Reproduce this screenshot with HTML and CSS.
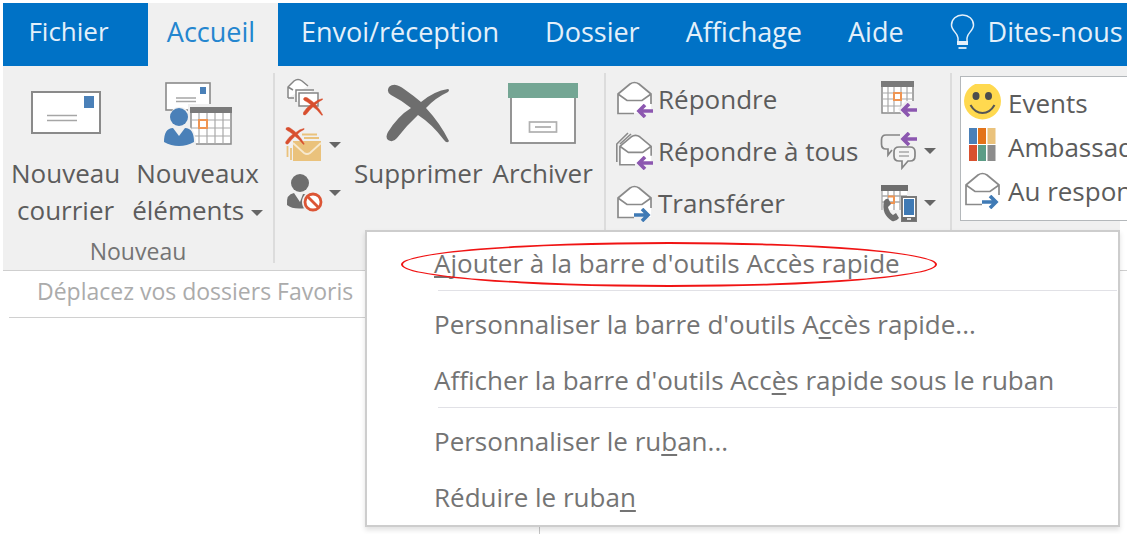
FILE: index.html
```html
<!DOCTYPE html>
<html lang="fr">
<head>
    <meta charset="UTF-8">
    <meta name="viewport" content="width=device-width, initial-scale=1.0">
    <title>Outlook - Accueil</title>
    <link rel="stylesheet" href="styles.css">
</head>
<body>
    <!-- Formes partagées par plusieurs icônes -->
    <svg class="sprites" width="0" height="0" aria-hidden="true">
        <symbol id="envelope" viewBox="0 0 38 38">
            <path d="M2 14 L14 4 Q18.500 1 23 4 L35 14 V33 H2 Z" fill="#fff"/>
            <path d="M18 33.500 H2 V14 L14 4 Q18.500 1 23 4 L35 14 V24 M2 14 L11 20.500 H26 L35 14" fill="none" stroke="#8a8a8a" stroke-width="1.700"/>
        </symbol>
        <symbol id="arrow-left" viewBox="0 0 18 14">
            <path d="M18 7 H3 M10 1 L4 7 L10 13" fill="none" stroke="#8c57b0" stroke-width="3.600"/>
        </symbol>
        <symbol id="arrow-right" viewBox="0 0 18 14">
            <path d="M0 7 H15 M8 1 L14 7 L8 13" fill="none" stroke="#3f7ab5" stroke-width="3.600"/>
        </symbol>
        <symbol id="cross" viewBox="0 0 64 60">
            <path d="M3 3 C8 -2 14 2 18 5 Q28 12 35 18 Q48 7 62 5 Q64 6 62 8 Q49 14 40 24 Q54 39 63 57 Q61 60 58 56 Q46 40 32 31 Q20 42 11 54 Q7 59 2 56 Q-1 53 2 48 Q12 32 25 24 Q15 16 5 11 Q0 8 3 3 Z"/>
        </symbol>
    </svg>

    <nav class="tabs">
        <button class="tab tab-file">Fichier</button>
        <button class="tab tab-active">Accueil</button>
        <button class="tab">Envoi/réception</button>
        <button class="tab">Dossier</button>
        <button class="tab">Affichage</button>
        <button class="tab">Aide</button>
        <button class="tab tab-tell">
            <svg width="26" height="36" viewBox="0 0 26 36" fill="none" stroke="#e4f0fa">
                <path d="M8 27 V24 C8 19 1.500 17 1.500 11 C1.500 5 6.500 1 12.500 1 C18.500 1 23.500 5 23.500 11 C23.500 17 17 19 17 24 V27" stroke-width="1.500"/>
                <path d="M7 29 H18" stroke-width="4"/>
                <path d="M8.500 34 H16.500" stroke-width="1.800"/>
            </svg>
            <span>Dites-nous</span>
        </button>
    </nav>

    <div class="ribbon">
        <!-- Nouveau -->
        <section class="group group-new">
            <div class="group-body">
                <button class="big-button">
                    <span class="big-icon">
                        <svg width="70" height="66" viewBox="0 0 70 66">
                            <rect x="1" y="11" width="68" height="41" fill="#fff" stroke="#8a8a8a" stroke-width="2"/>
                            <rect x="53" y="15" width="10" height="12" fill="#4a80b8"/>
                            <path d="M16 34.500 H46 M16 39.500 H46" stroke="#a6a6a6" stroke-width="1.500"/>
                        </svg>
                    </span>
                    Nouveau<br>courrier
                </button>
                <button class="big-button">
                    <span class="big-icon">
                        <svg width="68" height="66" viewBox="0 0 68 66">
                            <rect x="2" y="2" width="44" height="27" fill="#fff" stroke="#8a8a8a" stroke-width="1.600"/>
                            <rect x="36" y="6" width="6" height="7" fill="#4a80b8"/>
                            <path d="M12 17 H32 M12 20.500 H32" stroke="#a6a6a6" stroke-width="1.300"/>
                            <rect x="24" y="23" width="44" height="42" fill="#f0f0f0"/>
                            <rect x="27" y="27" width="40" height="36" fill="#fff" stroke="#8a8a8a" stroke-width="1.500"/>
                            <rect x="26" y="26" width="42" height="6" fill="#7a7a7a"/>
                            <path d="M35 32 V63 M43 32 V63 M51 32 V63 M59 32 V63 M27 39 H67 M27 47 H67 M27 55 H67" stroke="#a9a9a9" stroke-width="1.200"/>
                            <rect x="35" y="39" width="8" height="8" fill="#fff" stroke="#ef9553" stroke-width="2"/>
                            <path d="M7 35 Q7 26 15 26 Q24 26 25 35 Q25 42 21 45 Q32 45 32 65 H0 V45 H9 Q7 41 7 35" fill="#f0f0f0"/>
                            <circle cx="15" cy="36" r="9" fill="#4a80b8"/>
                            <path d="M9 47 L15 55 L21 47 Q30 47 30 61 Q23 65 15 65 Q7 65 0 61 Q0 47 9 47 Z" fill="#4a80b8"/>
                        </svg>
                    </span>
                    Nouveaux<br>éléments <i class="caret"></i>
                </button>
            </div>
            <div class="group-label">Nouveau</div>
        </section>

        <!-- Supprimer -->
        <section class="group group-delete">
            <div class="group-body">
                <div class="small-column">
                    <button class="small-button" aria-label="Nettoyer">
                        <svg width="38" height="38" viewBox="0 0 38 38" fill="#fff" stroke="#858585" stroke-width="1.500">
                            <path d="M3 20 V9 L9 3 Q13 0 17 3 L23 8 M3 20 H9 M3 9 L8 12"/>
                            <path d="M11 24 V12 H29"/>
                            <path d="M14 26 V15 H33 V28 H14 Z"/>
                            <use href="#cross" x="18" y="19" width="20" height="19" fill="#d84f2f" stroke="#d84f2f"/>
                        </svg>
                    </button>
                    <button class="small-button" aria-label="Courrier indésirable">
                        <svg width="38" height="38" viewBox="0 0 38 38">
                            <path d="M17 8.500 H32 M19 12 H34 M2.500 20 V31 M6 22 V34" stroke="#eac27c" stroke-width="1.800"/>
                            <rect x="8" y="15" width="28" height="20" fill="#eac27c"/>
                            <path d="M8 17 L19 27 Q22 29 25 27 L36 17" fill="none" stroke="#f7e9ce" stroke-width="1.800"/>
                            <use href="#cross" x="0" y="1" width="20" height="18" fill="#d84f2f" stroke="#d84f2f" stroke-width="1.500"/>
                        </svg>
                        <i class="caret"></i>
                    </button>
                    <button class="small-button" aria-label="Bloquer">
                        <svg width="38" height="38" viewBox="0 0 38 38">
                            <circle cx="15" cy="9" r="9" fill="#6e6e6e"/>
                            <path d="M9 19 L15 28 L18 20 Q23 20 25 24 L21 34 Q8 36 2 31 Q1 20 9 19 Z" fill="#6e6e6e"/>
                            <circle cx="28" cy="28" r="11" fill="#f0f0f0"/>
                            <circle cx="28" cy="28" r="8" fill="#fff" stroke="#dc5535" stroke-width="2.800"/>
                            <path d="M22 22 L34 34" stroke="#dc5535" stroke-width="2.800"/>
                        </svg>
                        <i class="caret"></i>
                    </button>
                </div>
                <button class="big-button">
                    <span class="big-icon">
                        <svg width="64" height="60" viewBox="0 0 64 60"><use href="#cross" fill="#6e6e6e"/></svg>
                    </span>
                    Supprimer
                </button>
                <button class="big-button">
                    <span class="big-icon">
                        <svg width="70" height="62" viewBox="0 0 70 62">
                            <rect x="3" y="8" width="64" height="52" fill="#fff" stroke="#8a8a8a" stroke-width="1.800"/>
                            <rect x="0" y="0" width="70" height="15" fill="#74a694"/>
                            <rect x="21.500" y="39" width="27" height="10" fill="none" stroke="#b0b0b0" stroke-width="1.700"/>
                            <path d="M27 44 H43" stroke="#a0a0a0" stroke-width="1.500"/>
                        </svg>
                    </span>
                    Archiver
                </button>
            </div>
        </section>

        <!-- Répondre -->
        <section class="group group-reply">
            <div class="reply-grid">
                <button class="reply-button">
                    <svg width="38" height="38" viewBox="0 0 38 38">
                        <use href="#envelope" width="38" height="38"/>
                        <use href="#arrow-left" x="19" y="24" width="18" height="14"/>
                    </svg>
                    Répondre
                </button>
                <button class="small-button" aria-label="Réunion">
                    <svg width="38" height="38" viewBox="0 0 38 38">
                        <rect x="2" y="2" width="31" height="31" fill="#fff" stroke="#8a8a8a" stroke-width="1.500"/>
                        <rect x="1" y="1" width="33" height="6" fill="#7a7a7a"/>
                        <path d="M8 7 V33 M14 7 V33 M21 7 V33 M27 7 V33 M2 13 H33 M2 19 H33 M2 26 H33" stroke="#a9a9a9" stroke-width="1.200"/>
                        <rect x="14" y="13" width="7" height="7" fill="#fff" stroke="#ef9553" stroke-width="2"/>
                        <path d="M18 29 L26 21 H38 V38 H24 Z" fill="#f0f0f0"/>
                        <use href="#arrow-left" x="19" y="23" width="18" height="14"/>
                    </svg>
                </button>
                <button class="reply-button">
                    <svg width="38" height="38" viewBox="0 0 38 38">
                        <path d="M0.800 30 V12 L12 1 M4 12 L15 2" fill="none" stroke="#8a8a8a" stroke-width="1.600"/>
                        <use href="#envelope" x="2" y="1" width="36" height="36"/>
                        <use href="#arrow-left" x="19" y="24" width="18" height="14"/>
                    </svg>
                    Répondre à tous
                </button>
                <button class="small-button" aria-label="Messagerie instantanée">
                    <svg width="38" height="38" viewBox="0 0 38 38" fill="none" stroke="#858585" stroke-width="1.700">
                        <path d="M20 3 H6 Q1.500 3 1.500 8 V12 Q1.500 17 6 17 H8 V23 L12 18"/>
                        <path d="M19 15 H30 Q35 15 35 20 V24 Q35 29 30 29 H28 L22 36 V29 H19 Q14 29 14 24 V20 Q14 15 19 15 Z" fill="#f4f4f4"/>
                        <path d="M19 20 H29 M19 24 H29" stroke="#a6a6a6" stroke-width="1.400"/>
                        <use href="#arrow-left" x="19" y="0" width="18" height="14"/>
                    </svg>
                    <i class="caret"></i>
                </button>
                <button class="reply-button">
                    <svg width="38" height="38" viewBox="0 0 38 38">
                        <use href="#envelope" width="38" height="38"/>
                        <use href="#arrow-right" x="18" y="24" width="18" height="14"/>
                    </svg>
                    Transférer
                </button>
                <button class="small-button" aria-label="Plus">
                    <svg width="38" height="38" viewBox="0 0 38 38">
                        <path d="M2 7 H27 V12 H20 V26 H2 Z" fill="#fff"/>
                        <path d="M2 6 V26 M8 7 V16 M14 7 V26 M20 7 V26 M2 12 H27 M2 18 H20" stroke="#a9a9a9" stroke-width="1.300"/>
                        <rect x="1" y="1" width="27" height="6" fill="#6e6e6e"/>
                        <path d="M8 12.500 H14 V19 H10" fill="none" stroke="#ef9553" stroke-width="2"/>
                        <path d="M4 17 Q7 13 9 16 L11 20 L8 23 Q9 28 13 31 L16 29 L19 34 Q16 38 12 37 Q1 30 4 17 Z" fill="#6e6e6e"/>
                        <rect x="22" y="13" width="14" height="24" fill="#fff" stroke="#7a7a7a" stroke-width="2"/>
                        <rect x="24" y="15" width="10" height="16" fill="#3f7ab5"/>
                        <rect x="22" y="33" width="14" height="4" fill="#6e6e6e"/>
                        <path d="M27 35 H31" stroke="#fff" stroke-width="1.500"/>
                    </svg>
                    <i class="caret"></i>
                </button>
            </div>
        </section>

        <!-- Actions rapides -->
        <section class="group group-steps">
            <div class="gallery">
                <button class="gallery-item">
                    <svg width="38" height="38" viewBox="0 0 38 38">
                        <circle cx="18.500" cy="17" r="18.500" fill="#ffd94f"/>
                        <ellipse cx="12" cy="12" rx="3.500" ry="4" fill="#4d4d4d"/>
                        <ellipse cx="24.500" cy="12" rx="3.500" ry="4" fill="#4d4d4d"/>
                        <path d="M6.500 21 Q11 29 18.500 29 Q26 29 30.500 21" fill="none" stroke="#555" stroke-width="2"/>
                    </svg>
                    Events
                </button>
                <button class="gallery-item">
                    <svg width="38" height="38" viewBox="0 0 38 38">
                        <rect x="5" y="0" width="8" height="16" fill="#4a80b8"/>
                        <rect x="14" y="0" width="8" height="16" fill="#e37319"/>
                        <rect x="23.500" y="0" width="8" height="16" fill="#eac27c"/>
                        <rect x="5" y="17" width="8" height="16" fill="#d9512f"/>
                        <rect x="14" y="17" width="8" height="16" fill="#5c9c86"/>
                        <rect x="23.500" y="17" width="8" height="16" fill="#8c8c8c"/>
                    </svg>
                    Ambassad
                </button>
                <button class="gallery-item">
                    <svg width="38" height="38" viewBox="0 0 38 38">
                        <use href="#envelope" y="-1" width="38" height="38"/>
                        <use href="#arrow-right" x="18" y="23" width="18" height="14"/>
                    </svg>
                    Au respon
                </button>
            </div>
        </section>
    </div>

    <main class="workspace">
        <aside class="folders">
            <p class="favorites">Déplacez vos dossiers Favoris</p>
        </aside>
    </main>

    <!-- Menu contextuel du ruban -->
    <div class="context-menu" role="menu">
        <button class="menu-item" role="menuitem"><u>A</u>jouter à la barre d'outils Accès rapide</button>
        <hr class="menu-line">
        <button class="menu-item" role="menuitem">Personnaliser la barre d'outils A<u>c</u>cès rapide...</button>
        <button class="menu-item" role="menuitem">Afficher la barre d'outils Acc<u>è</u>s rapide sous le ruban</button>
        <hr class="menu-line">
        <button class="menu-item" role="menuitem">Personnaliser le ru<u>b</u>an...</button>
        <button class="menu-item" role="menuitem">Réduire le ruba<u>n</u></button>
        <span class="highlight"></span>
    </div>
</body>
</html>
```

FILE: styles.css
```css
* {
    box-sizing: border-box;
}

body {
    font-family: "Open Sans", "Noto Sans", sans-serif;
    font-size: 26px;
    margin: 0;
    padding: 3px 0 0 3px;
    min-height: 100vh;
    display: flex;
    flex-direction: column;
    position: relative;
    overflow: hidden;
    background-color: #fff;
    color: #5c5c5c;
}

button {
    font: inherit;
    color: inherit;
    background: none;
    border: none;
    margin: 0;
    padding: 0;
    white-space: nowrap;
    cursor: pointer;
}

svg {
    flex: none;
}

.sprites {
    position: absolute;
}

/* Onglets */
.tabs {
    display: flex;
    height: 63px;
    background-color: #0072c6;
    color: #e4f0fa;
    overflow: hidden;
}

.tab {
    flex: none;
    padding: 0 23px 6px;
    font-size: 27px;
}

.tab-file {
    width: 145px;
    padding: 0 14px 8px 0;
    font-size: 26px;
}

.tab-active {
    width: 130px;
    padding: 0 4px 6px 0;
    background-color: #f0f0f0;
    color: #2486cf;
}

.tab-tell {
    display: flex;
    align-items: center;
    gap: 12px;
}

/* Ruban */
.ribbon {
    display: flex;
    position: relative;
    padding: 7px 0;
    background-color: #f0f0f0;
    border-bottom: 1px solid #cfcfcf;
    overflow: hidden;
}

.ribbon::after {
    content: "";
    position: absolute;
    top: 155px;
    right: 0;
    bottom: 0;
    width: 7px;
    background-color: #fff;
}

.group {
    flex: none;
    border-right: 2px solid #dcdcdc;
}

.group-body {
    display: flex;
}

.group-new {
    width: 272px;
}

.group-new .group-body {
    padding-left: 8px;
    gap: 12px;
}

.group-delete {
    width: 331px;
    padding-left: 10px;
}

.group-delete .group-body {
    gap: 10px;
}

.group-reply {
    width: 346px;
    padding-left: 10px;
}

.group-steps {
    flex: 1;
    min-width: 0;
    padding: 3px 0 0 8px;
    border-right: none;
}

.group-label {
    margin-top: 10px;
    font-size: 23px;
    line-height: 24px;
    text-align: center;
    color: #747474;
}

.big-button {
    padding-top: 8px;
    line-height: 37px;
    align-self: flex-start;
}

.big-icon {
    display: flex;
    justify-content: center;
    align-items: center;
    height: 66px;
    margin-bottom: 8px;
}

.caret {
    display: inline-block;
    border: 6px solid transparent;
    border-top-color: #666;
    border-bottom: none;
    vertical-align: middle;
}

.small-button {
    display: flex;
    align-items: center;
    gap: 6px;
}

.small-column {
    display: grid;
    grid-template-rows: repeat(3, 48px);
    width: 59px;
}

.reply-grid {
    display: grid;
    grid-template-columns: 264px auto;
    grid-template-rows: repeat(3, 52px);
    justify-content: start;
}

.reply-button {
    display: flex;
    align-items: center;
    gap: 4px;
    padding-bottom: 1px;
}

.gallery {
    height: 145px;
    padding: 4px 0 0 3px;
    background-color: #fff;
    border: 1px solid #b4b8bb;
    border-right: none;
    overflow: hidden;
}

.gallery-item {
    display: flex;
    align-items: center;
    gap: 6px;
    height: 44px;
}

/* Volet des dossiers */
.workspace {
    flex: 1;
    display: flex;
}

.folders {
    width: 537px;
    padding-left: 6px;
    border-right: 1px solid #c6c6c6;
}

.favorites {
    margin: 0;
    padding: 0 28px 5px;
    border-bottom: 1px solid #d0d0d0;
    font-size: 23px;
    line-height: 41px;
    color: #ababab;
}

/* Menu contextuel */
.context-menu {
    position: absolute;
    top: 230px;
    left: 365px;
    right: 7px;
    display: flex;
    flex-direction: column;
    padding: 6px 1px 1px 67px;
    background-color: #fff;
    border: 2px solid #cdcdcd;
    box-shadow: 0 3px 5px rgba(0, 0, 0, 0.12);
    color: #747474;
}

.menu-item {
    height: 52px;
    padding-bottom: 3px;
    text-align: left;
}

.menu-item + .menu-item {
    margin-top: 4px;
}

.menu-item u {
    text-underline-offset: 3px;
    text-decoration-thickness: 2px;
}

.menu-line {
    width: auto;
    margin: 0 0 8px 4px;
    border: none;
    border-top: 1px solid #e1e1e6;
}

/* Ellipse rouge autour de la première commande */
.highlight {
    position: absolute;
    top: 10px;
    left: 34px;
    width: 536px;
    height: 45px;
    border: 2px solid #f01414;
    border-radius: 50%;
    pointer-events: none;
}
```
